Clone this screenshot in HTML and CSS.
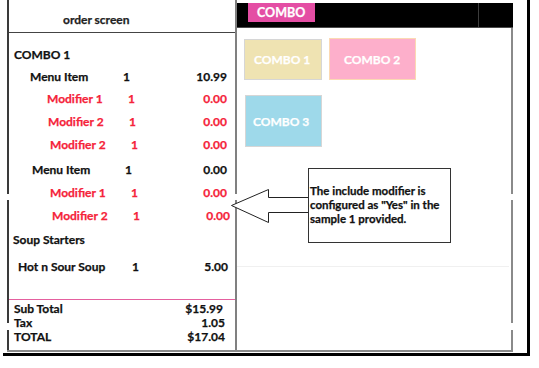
FILE: index.html
```html
<!DOCTYPE html>
<html lang="en">
<head>
    <meta charset="UTF-8">
    <title>Order Screen</title>
    <link rel="stylesheet" href="styles.css">
</head>
<body>
    <div class="frame">
        <div class="screen">
            <section class="order">
                <header class="order-head">order screen</header>
                <div class="lines">
                    <div class="row group">COMBO 1</div>
                    <div class="row item"><span class="name">Menu Item</span><span class="qty">1</span><span class="price">10.99</span></div>
                    <div class="row mod"><span class="name">Modifier 1</span><span class="qty">1</span><span class="price">0.00</span></div>
                    <div class="row mod in1 tall"><span class="name">Modifier 2</span><span class="qty">1</span><span class="price">0.00</span></div>
                    <div class="row mod in2 tall"><span class="name">Modifier 2</span><span class="qty">1</span><span class="price">0.00</span></div>
                    <div class="row item in1 tall spaced"><span class="name">Menu Item</span><span class="qty">1</span><span class="price">0.00</span></div>
                    <div class="row mod in2 tall"><span class="name">Modifier 1</span><span class="qty">1</span><span class="price">0.00</span></div>
                    <div class="row mod in3 tall"><span class="name">Modifier 2</span><span class="qty">1</span><span class="price">0.00</span></div>
                    <div class="row group tall soup">Soup Starters</div>
                    <div class="row dish tall"><span class="name">Hot n Sour Soup</span><span class="qty">1</span><span class="price">5.00</span></div>
                </div>
                <div class="totals">
                    <div class="total-row sub"><span>Sub Total</span><span>$15.99</span></div>
                    <div class="total-row"><span>Tax</span><span>1.05</span></div>
                    <div class="total-row"><span>TOTAL</span><span>$17.04</span></div>
                </div>
            </section>
            <section class="menu">
                <div class="menu-bar">
                    <span class="tab">COMBO</span>
                    <span class="bar-end"></span>
                </div>
                <div class="menu-body">
                    <div class="combos">
                        <button class="combo beige">COMBO 1</button>
                        <button class="combo pink">COMBO 2</button>
                        <button class="combo blue">COMBO 3</button>
                    </div>
                    <div class="menu-rule"></div>
                </div>
            </section>
        </div>
    </div>

    <!-- callout pointing at the included modifiers -->
    <svg class="arrow" width="82" height="38" viewBox="0 0 82 38">
        <polygon points="2.5,18.5 39.5,2.5 39.5,10.5 80,10.5 80,25.5 39.5,25.5 39.5,35.5" fill="#fff" stroke="#222" stroke-width="1"/>
    </svg>
    <div class="note">The include modifier is configured as "Yes" in the sample 1 provided.</div>

    <!-- little breaks in the frame lines -->
    <span class="notch n1"></span>
    <span class="notch n2"></span>
    <span class="notch n3"></span>
    <span class="notch n4"></span>
    <span class="notch n5"></span>
    <span class="notch n6"></span>
    <span class="notch n7"></span>
</body>
</html>
```

FILE: styles.css
```css
body {
    margin: 0;
    background: #fff;
    font-family: Lato, "Open Sans", Arial, sans-serif;
    font-weight: bold;
    font-size: 12px;
    color: #111;
    -webkit-text-stroke: 0.25px currentColor;
}
.frame {
    margin: 3px 0 0 3px;
    width: 520px;
    height: 353px;
    padding-left: 4px;
    border-right: 3px solid #000;
    border-bottom: 3px solid #000;
}
.screen {
    display: flex;
    margin-top: -3px;
    width: 506px;
    height: 352px;
    box-sizing: border-box;
    border-bottom: 2px solid #8a8a8a;
}

/* Order panel */
.order {
    width: 230px;
    box-sizing: border-box;
    border-left: 2px solid #3a3a3a;
    border-right: 2px solid #808080;
    display: flex;
    flex-direction: column;
}
.order-head {
    height: 33px;
    box-sizing: border-box;
    border-bottom: 1px solid #444;
    padding: 8px 0 0 54px;
    line-height: 24px;
    color: #222;
}
.lines {
    padding-top: 11px;
}
.row {
    display: flex;
    height: 22px;
    line-height: 22px;
    padding-right: 8px;
    white-space: nowrap;
}
.row.tall {
    height: 23px;
    line-height: 23px;
}
.group {
    padding-left: 5px;
}
.item {
    padding-left: 21px;
}
.item .name {
    width: 93px;
}
.mod {
    padding-left: 38px;
    color: #f5233a;
}
.mod .name {
    width: 81px;
}
.item.in1 {
    padding-left: 23px;
}
.mod.in1 {
    padding-left: 39px;
}
.mod.in2 {
    padding-left: 41px;
}
.mod.in3 {
    padding-left: 43px;
    padding-right: 5px;
}
.spaced {
    margin-top: 2px;
}
.soup {
    margin-top: 1px;
    padding-left: 4px;
}
.dish {
    margin-top: 4px;
    padding-left: 9px;
    padding-right: 7px;
}
.dish .name {
    width: 114px;
}
.price {
    margin-left: auto;
}
.totals {
    margin-top: auto;
    border-top: 1px solid #e5609f;
    padding: 2px 10px 6px 5px;
}
.total-row {
    display: flex;
    justify-content: space-between;
    height: 14px;
    line-height: 14px;
}
.total-row.sub {
    padding-right: 2px;
}

/* Menu panel */
.menu {
    flex: 1;
    margin-top: 3px;
    display: flex;
    flex-direction: column;
}
.menu-bar {
    display: flex;
    height: 25px;
    box-sizing: border-box;
    background: #000;
    border-bottom: 1px solid #4a4a4a;
}
.tab {
    margin-left: 11px;
    width: 67px;
    height: 19px;
    box-sizing: border-box;
    padding-left: 9px;
    line-height: 19px;
    font-size: 12.5px;
    background: #e44ea4;
    color: #fff;
}
.bar-end {
    margin-left: auto;
    width: 34px;
    border-left: 1px solid #3c3c3c;
}
.menu-body {
    flex: 1;
    border-right: 2px solid #8a8a8a;
    padding: 11px 0 0 7px;
}
.combos {
    display: grid;
    grid-template-columns: 78px 87px;
    grid-template-rows: 41px 52px;
    column-gap: 7px;
    row-gap: 15px;
}
.combo {
    font: inherit;
    color: #fff;
    text-align: left;
    padding: 0 0 0 9px;
    border: 1px solid #d6d6d6;
}
.beige {
    background: #efe3b2;
}
.pink {
    background: #fdafcb;
    border-color: #fbd9b3;
    padding-left: 14px;
    margin-top: -1px;
}
.blue {
    background: #9ed9ea;
    padding-left: 7px;
    margin-left: 1px;
}
.menu-rule {
    margin: 119px 2px 0 -7px;
    height: 1px;
    background: #f0f0f0;
}

/* Callout */
.arrow {
    position: absolute;
    left: 229px;
    top: 187px;
}
.note {
    position: absolute;
    left: 308px;
    top: 168px;
    width: 143px;
    height: 75px;
    box-sizing: border-box;
    border: 1px solid #333;
    background: #fff;
    padding: 15px 0 0 1px;
    line-height: 14px;
    font-size: 11.5px;
}

.notch {
    position: absolute;
    background: #fff;
}
.n1, .n2, .n3, .n4 {
    top: 194px;
    height: 6px;
}
.n5, .n6, .n7 {
    top: 323px;
    height: 7px;
}
.n1, .n5 {
    left: 6px;
    width: 4px;
}
.n2 {
    left: 234px;
    width: 4px;
}
.n3, .n6 {
    left: 510px;
    width: 4px;
}
.n4, .n7 {
    left: 521px;
    width: 6px;
}
```
